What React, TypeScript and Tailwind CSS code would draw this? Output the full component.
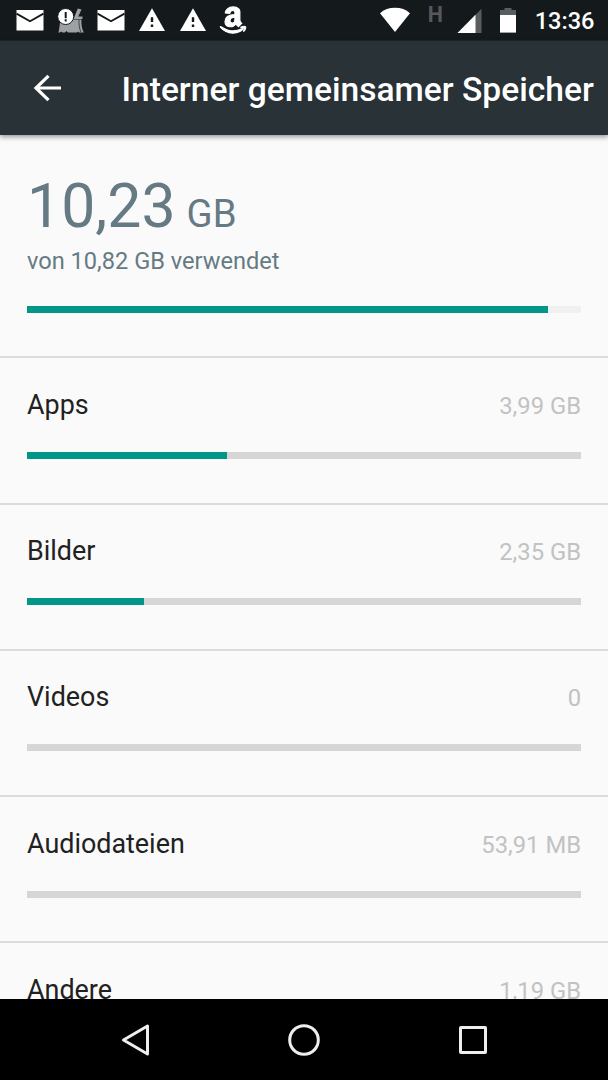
import { FaAmazon } from "react-icons/fa";

interface StorageItem {
  label: string;
  size: string;
  percent: number;
}

const ITEMS: StorageItem[] = [
  { label: "Apps", size: "3,99 GB", percent: 36.1 },
  { label: "Bilder", size: "2,35 GB", percent: 21.1 },
  { label: "Videos", size: "0", percent: 0 },
  { label: "Audiodateien", size: "53,91 MB", percent: 0 },
  { label: "Andere", size: "1,19 GB", percent: 10.9 },
];

function MailIcon() {
  return (
    <svg width="28" height="28" viewBox="0 0 28 28" fill="#fff">
      <path d="M0.5 4h27v20.5h-27z" />
      <path d="M0.5 7.6L14 15.2l13.5-7.6" fill="none" stroke="#14191c" strokeWidth="1.8" />
    </svg>
  );
}

function WarningIcon() {
  return (
    <svg width="28" height="28" viewBox="0 0 28 28">
      <path d="M14 2.3L27 25H1z" fill="#fff" />
      <path d="M12.8 11.3h2.4v4.8h-2.4zM12.8 18.4h2.4v2.6h-2.4z" fill="#14191c" />
    </svg>
  );
}

// broom with an alert badge
function CleanerIcon() {
  return (
    <svg width="28" height="28" viewBox="0 0 28 28">
      <path d="M20.8 2.5l3.7 1-3.2 7h4.2v2.5h-9z" fill="#9da1a3" />
      <path d="M3 16l13-2.5h8.500c-.4 4.800.3 9.200 2.300 13H22l-1-1-1 1h-9l-1.500-1.500-1.500 1.500H5.500L4 25.500l-1 1H1.400c1-3.500 1.200-7 1.600-10.500z" fill="#9da1a3" />
      <path d="M22 13.500c-.2 4.300.3 8.500 1.800 12.500" stroke="#44494c" strokeWidth="1" fill="none" />
      <circle cx="8.700" cy="10.500" r="8" fill="#fff" stroke="#14191c" strokeWidth="1" />
      <path d="M7.700 6h2v6.200h-2zM7.700 13.300h2v2.100h-2z" fill="#14191c" />
    </svg>
  );
}

function StatusBar() {
  return (
    <div className="flex h-[41px] shrink-0 items-center justify-between border-b border-[#1c252a] bg-[#14191c] pr-[13.5px] pl-[10px] text-white">
      <div className="flex h-full items-center [&>span]:flex [&>span]:w-[40.6px] [&>span]:justify-center">
        <span><MailIcon /></span>
        <span><CleanerIcon /></span>
        <span><MailIcon /></span>
        <span><WarningIcon /></span>
        <span><WarningIcon /></span>
        <span><FaAmazon size={30} stroke="#fff" strokeWidth={20} /></span>
      </div>
      <div className="flex h-full items-center">
        <svg width="32" height="28" viewBox="0 0 32 28" className="mr-[17px]">
          <path d="M16 26L1 7.2C5 3.5 10 1.8 16 1.800S27 3.500 31 7.200z" fill="#fff" />
        </svg>
        <span className="mr-[14.5px] mb-[10px] w-[15px] text-center text-[21.5px] leading-none font-bold text-[#56595b]">H</span>
        <svg width="25" height="28" viewBox="0 0 25 28" className="mr-[18px]">
          <path d="M24.5 2.7V27H0.5z" fill="#5a5d5f" />
          <path d="M18.5 8.8V27H0.5z" fill="#fff" />
        </svg>
        <svg width="16" height="28" viewBox="0 0 16 28" className="mr-[18.5px]">
          <path d="M4.5 2h7v2H16v5H0V4h4.500z" fill="#5a5d5f" />
          <path d="M0 9h16v17.600H0z" fill="#fff" />
        </svg>
        <span className="mt-[3px] text-[23.6px] leading-none font-medium">13:36</span>
      </div>
    </div>
  );
}

function Toolbar() {
  return (
    <header className="z-10 flex h-[94px] shrink-0 items-center bg-[#283237] pl-[33px] text-white shadow-[0_2px_5px_rgba(0,0,0,0.4)]">
      <svg width="28" height="28" viewBox="0 0 28 28" fill="none" stroke="#fff" strokeWidth="3.2">
        <path d="M28 14H4M15.5 1.8L3 14l12.5 12.2" />
      </svg>
      <h1 className="mt-[3px] ml-[60.5px] text-[33.6px] leading-none font-medium whitespace-nowrap">
        Interner gemeinsamer Speicher
      </h1>
    </header>
  );
}

function Row({ item }: { item: StorageItem }) {
  return (
    <div className="flex h-[146.25px] shrink-0 flex-col border-t-2 border-[#dcdcdc] px-[27px] pt-[28.6px]">
      <div className="flex h-9 items-center justify-between">
        <span className="text-[26.9px] leading-9 text-[#212121]">{item.label}</span>
        <span className="mt-0.5 text-[23.8px] leading-9 text-[#c2c2c2]">{item.size}</span>
      </div>
      <div className="mt-[28.9px] h-[7px] bg-[#d6d6d6]">
        <div className="h-full bg-[#009688]" style={{ width: `${item.percent}%` }} />
      </div>
    </div>
  );
}

function NavBar() {
  return (
    <nav className="grid h-[81px] shrink-0 grid-cols-[1fr_169px_1fr] items-center bg-black">
      <svg width="32" height="34" viewBox="0 0 32 34" className="mr-[68px] justify-self-end" fill="none" stroke="#eee" strokeWidth="3">
        <path d="M27.5 3v28L3.5 17z" strokeLinejoin="round" />
      </svg>
      <svg width="34" height="34" viewBox="0 0 34 34" className="justify-self-center" fill="none" stroke="#eee" strokeWidth="3">
        <circle cx="17" cy="17" r="14.3" />
      </svg>
      <svg width="32" height="32" viewBox="0 0 32 32" className="ml-[68px]" fill="none" stroke="#eee" strokeWidth="3">
        <rect x="3.5" y="3.5" width="25" height="25" rx="0.5" strokeLinejoin="round" />
      </svg>
    </nav>
  );
}

export default function App() {
  return (
    <div className="flex h-[1080px] w-[608px] flex-col overflow-hidden bg-[#fafafa] font-[Roboto,sans-serif]">
      <StatusBar />
      <Toolbar />
      <main className="flex min-h-0 flex-1 flex-col overflow-hidden">
        <section className="h-[221.4px] shrink-0 px-[27px] pt-[36px] text-[#667a84]">
          <div className="text-[60.75px] leading-[71px]">
            10,23 <span className="-ml-1 text-[38.3px]">GB</span>
          </div>
          <div className="-mt-[2px] text-[23.6px] leading-7">von 10,82 GB verwendet</div>
          <div className="mt-[31px] h-[7px] bg-[#f0f0f0]">
            <div className="h-full w-[94%] bg-[#009688]" />
          </div>
        </section>
        {ITEMS.map((item) => (
          <Row key={item.label} item={item} />
        ))}
      </main>
      <NavBar />
    </div>
  );
}
